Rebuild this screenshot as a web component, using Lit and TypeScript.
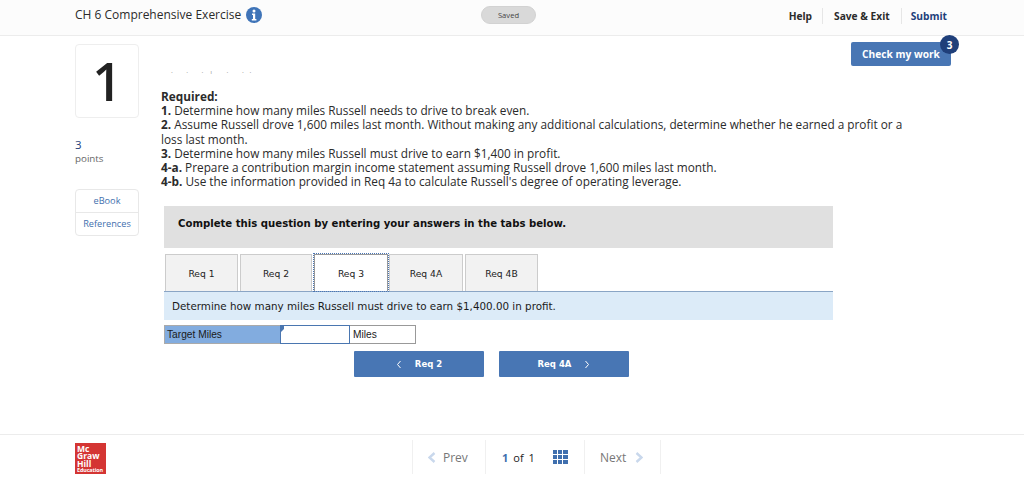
import { LitElement, html, css } from "lit";
import { customElement } from "lit/decorators.js";

@customElement("app-root")
export class AppRoot extends LitElement {
  static styles = css`
    :host { display: block; width: 1024px; height: 478px; overflow: hidden; background: #fff; color: #2b2b2b; font-family: "Open Sans", sans-serif; font-variant-ligatures: none; }
    .top { height: 36px; border-bottom: 1px solid #ececec; background: #fcfcfc; display: flex; align-items: center; padding: 0 77px 6px 75px; position: relative; box-sizing: border-box; }
    .title { font-size: 12px; }
    .info { width: 16px; height: 16px; margin-left: 5px; display: block; }
    .saved { position: absolute; left: 481px; top: 6px; width: 55px; height: 18px; border-radius: 9px; background: #d9d9d9; border: 1px solid #d2d2d2; box-sizing: border-box; font-size: 7.6px; display: flex; align-items: center; justify-content: center; color: #444; }
    .links { margin-left: auto; margin-top: 3px; display: flex; align-items: center; font-size: 10.2px; font-weight: 700; }
    .links span { display: block; padding: 0 11px; line-height: 16px; border-left: 1px solid #e6e6e6; }
    .links span:first-child { border: 0; padding-right: 10px; }
    .links .sub { color: #1f3f7a; padding: 0 0 0 9px; }
    .main { height: 398px; display: grid; grid-template-columns: 64px 1fr; column-gap: 22px; padding-left: 75px; position: relative; box-sizing: border-box; }
    .side { padding-top: 8px; }
    .num { height: 74px; border: 1px solid #eee; border-radius: 4px; box-sizing: border-box; display: flex; align-items: center; justify-content: center; font: 550 52px/1 "Open Sans", sans-serif; color: #222; }
    .pts { margin-top: 20px; font-size: 9.8px; color: #666; line-height: 14px; }
    .pts b { display: block; font-weight: 400; color: #1f3f7a; font-size: 11.5px; }
    .res { margin-top: 23px; border: 1px solid #e8e8e8; border-radius: 4px; font-size: 9.2px; color: #3f6fae; text-align: center; }
    .res div { height: 22px; line-height: 22px; }
    .res div + div { border-top: 1px solid #e8e8e8; }
    .content { min-width: 0; }
    .faint { height: 3px; margin-top: 35px; font-size: 7px; line-height: 3px; color: #888; letter-spacing: 2px; padding-left: 10px; overflow: hidden; }
    .req { margin-top: 15px; width: 745px; height: 100px; font-size: 11.8px; line-height: 14.2px; color: #2b2b2b; }
    .req b { font-weight: 700; }
    .q { margin: 17px 0 0 3px; width: 669px; }
    .banner { height: 42px; background: #e0e0e0; font: bold 10.15px "DejaVu Sans", sans-serif; color: #111; padding: 12px 14px 0; box-sizing: border-box; }
    .tabs { display: flex; gap: 2px; margin-top: 6px; padding-left: 1px; height: 37px; }
    .tab { width: 73px; height: 37px; box-sizing: border-box; border: 1px solid #ccc; border-bottom: 0; background: #f2f2f2; font: 9.2px "DejaVu Sans", sans-serif; color: #222; display: flex; align-items: center; justify-content: center; }
    .tab.n { width: 72px; }
    .tab.on { width: 74px; margin-right: -1px; background: #fff; border: 1px solid #999; border-bottom: 0; outline: 1px dotted #4a76b5; }
    .tab.w { width: 74px; }
    .desc { height: 29px; background: #dcebf8; border-top: 1px solid #8aa5c5; font: 10.35px/28px "DejaVu Sans", sans-serif; color: #1a1a1a; padding-left: 8px; box-sizing: border-box; }
    .row { display: flex; margin-top: 5px; height: 19px; font: 10.2px/17px "Liberation Sans", sans-serif; color: #1a1a1a; }
    .lab { width: 116px; background: #82acdf; border: 1px solid #aaa; border-right: 0; padding-left: 2px; box-sizing: border-box; }
    .inp { width: 70px; border: 1px solid #4a76b0; background: #fff; box-sizing: border-box; position: relative; }
    .inp i { position: absolute; left: 0; top: 0; width: 0; height: 0; border-top: 3px solid #4a76b0; border-bottom: 3px solid transparent; border-left: 3px solid #4a76b0; }
    .unit { width: 66px; border: 1px solid #999; border-left: 0; padding-left: 3px; box-sizing: border-box; }
    .nav { display: flex; gap: 15px; margin: 7px 0 0 190px; }
    .nb { width: 130px; height: 26px; background: #4876b4; border-radius: 1px; color: #fff; font: bold 8.5px "DejaVu Sans", sans-serif; display: flex; align-items: center; justify-content: center; gap: 13px; }
    .nb svg, .foot svg { display: block; }
    .check { position: absolute; left: 851px; top: 6px; width: 100px; height: 24px; padding-bottom: 1px; box-sizing: border-box; background: #4876b4; border-radius: 2px; color: #fff; font-size: 10.2px; font-weight: 700; display: flex; align-items: center; justify-content: center; }
    .check em { position: absolute; right: -8px; top: -7px; width: 19px; height: 19px; border-radius: 50%; background: #1f3f7a; font-style: normal; font-weight: 700; font-size: 10px; display: flex; align-items: center; justify-content: center; }
    .foot { height: 44px; border-top: 1px solid #ececec; display: flex; padding-left: 75px; position: relative; box-sizing: border-box; }
    .logo { width: 31px; height: 31px; margin-top: 8px; background: #d43533; color: #fff; font: bold 8.5px/7.4px "Open Sans", sans-serif; box-sizing: border-box; padding: 2px 0 0 2px; overflow: hidden; }
    .logo small { display: block; font-size: 5.4px; line-height: 6px; margin-top: 0; letter-spacing: -.1px; }
    .pager { position: absolute; left: 412px; top: 5px; height: 34px; display: flex; font-size: 12px; color: #777; }
    .pager > div { display: flex; align-items: center; border-left: 1px solid #f0f0f0; box-sizing: border-box; }
    .prev { width: 73px; padding-left: 15px; gap: 7px; }
    .mid { width: 99px; padding-left: 16px; color: #222; font-size: 11px; word-spacing: 2px; }
    .mid b { color: #3f6fae; margin-right: 5px; }
    .mid svg { margin-left: 18px; }
    .next { width: 77px; padding-left: 15px; gap: 9px; border-right: 1px solid #f0f0f0; }
  `;

  private chev(dir: "l" | "r", c: string, w: number, h: number, sw: number) {
    const d = dir === "l" ? `M${w - 1.5} 1 L1.5 ${h / 2} L${w - 1.5} ${h - 1}` : `M1.5 1 L${w - 1.5} ${h / 2} L1.5 ${h - 1}`;
    return html`<svg width=${w} height=${h} viewBox="0 0 ${w} ${h}"><path d=${d} fill="none" stroke=${c} stroke-width=${sw}/></svg>`;
  }

  render() {
    return html`
      <div class="top">
        <div class="title">CH 6 Comprehensive Exercise</div>
        <svg class="info" viewBox="0 0 16 16"><circle cx="8" cy="8" r="8" fill="#3f74b8"/><circle cx="8" cy="4" r="1.5" fill="#fff"/><path d="M6 6.6h3.2v5.4h1.2v1.4H5.8V12H7V8H6z" fill="#fff"/></svg>
        <div class="saved">Saved</div>
        <div class="links"><span>Help</span><span>Save &amp; Exit</span><span class="sub">Submit</span></div>
      </div>
      <div class="main">
        <div class="side">
          <div class="num">1</div>
          <div class="pts"><b>3</b>points</div>
          <div class="res"><div>eBook</div><div>References</div></div>
        </div>
        <div class="content">
          <div class="faint">· . · , · | . · . · · .</div>
          <div class="req">
            <b>Required:</b><br>
            <b>1.</b> Determine how many miles Russell needs to drive to break even.<br>
            <b>2.</b> Assume Russell drove 1,600 miles last month. Without making any additional calculations, determine whether he earned a profit or a loss last month.<br>
            <b>3.</b> Determine how many miles Russell must drive to earn $1,400 in profit.<br>
            <b>4-a.</b> Prepare a contribution margin income statement assuming Russell drove 1,600 miles last month.<br>
            <b>4-b.</b> Use the information provided in Req 4a to calculate Russell's degree of operating leverage.
          </div>
          <div class="q">
            <div class="banner">Complete this question by entering your answers in the tabs below.</div>
            <div class="tabs">
              <div class="tab">Req 1</div><div class="tab n">Req 2</div><div class="tab on">Req 3</div><div class="tab w">Req 4A</div><div class="tab">Req 4B</div>
            </div>
            <div class="desc">Determine how many miles Russell must drive to earn $1,400.00 in profit.</div>
            <div class="row"><div class="lab">Target Miles</div><div class="inp"><i></i></div><div class="unit">Miles</div></div>
            <div class="nav">
              <div class="nb">${this.chev("l", "#fff", 6, 9, 1)}<span>Req 2</span></div>
              <div class="nb"><span>Req 4A</span>${this.chev("r", "#fff", 6, 9, 1)}</div>
            </div>
          </div>
        </div>
        <div class="check">Check my work<em>3</em></div>
      </div>
      <div class="foot">
        <div class="logo">Mc<br>Graw<br>Hill<small>Education</small></div>
        <div class="pager">
          <div class="prev">${this.chev("l", "#c9d8ec", 8, 11, 2.4)}<span>Prev</span></div>
          <div class="mid"><b>1</b> of 1
            <svg width="15" height="14" viewBox="0 0 15 14" fill="#3f6fae"><rect width="4" height="4"/><rect x="5" width="4" height="4"/><rect x="10" width="5" height="4"/><rect y="5" width="4" height="4"/><rect x="5" y="5" width="4" height="4"/><rect x="10" y="5" width="5" height="4"/><rect y="10" width="4" height="4"/><rect x="5" y="10" width="4" height="4"/><rect x="10" y="10" width="5" height="4"/></svg>
          </div>
          <div class="next"><span>Next</span>${this.chev("r", "#c9d8ec", 8, 11, 2.4)}</div>
        </div>
      </div>
    `;
  }
}
